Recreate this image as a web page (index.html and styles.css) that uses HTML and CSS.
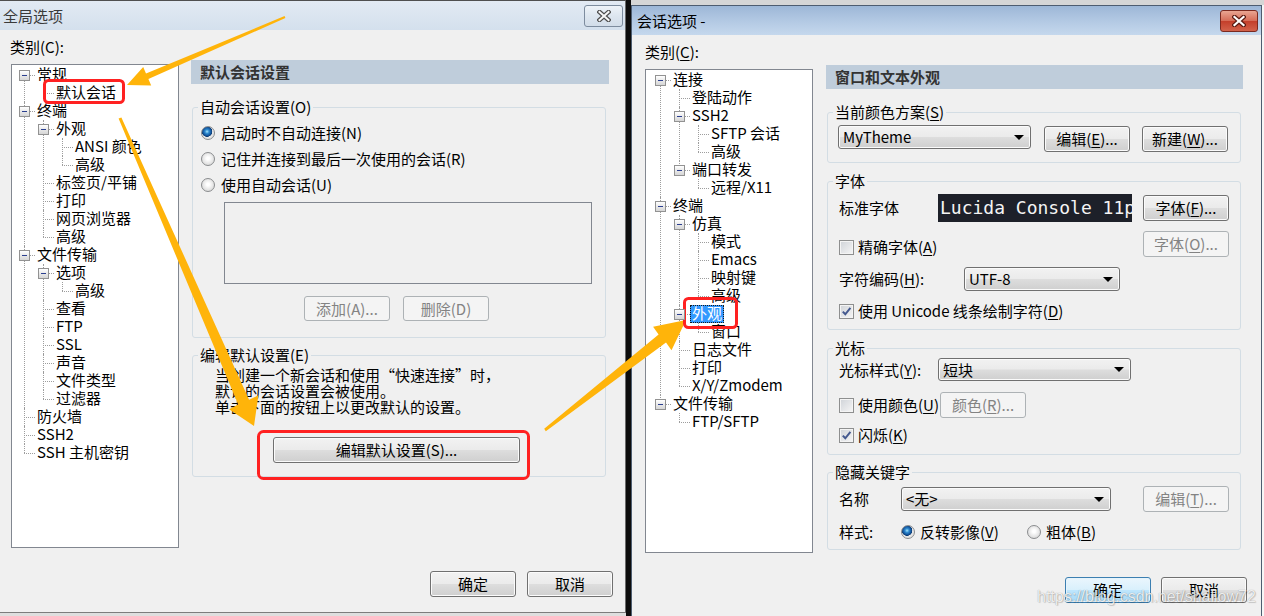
FILE: index.html
```html
<!DOCTYPE html>
<html lang="zh-CN">
<head>
    <meta charset="UTF-8">
    <title>全局选项 / 会话选项</title>
    <link rel="stylesheet" href="styles.css">
</head>
<body>
<div class="screen">
    <div class="col-left">
        <section class="dialog global">
            <header class="titlebar">
                <span class="title">全局选项</span>
                <button class="close">
                    <svg width="14" height="12" viewBox="0 0 14 12"><path d="M2.5 2 L11.5 10 M11.5 2 L2.5 10" stroke="#4d4d4d" stroke-width="4.4" stroke-linecap="square"/><path d="M2.5 2 L11.5 10 M11.5 2 L2.5 10" stroke="#f6f6f6" stroke-width="2" stroke-linecap="square"/></svg>
                </button>
            </header>
            <div class="dlg-body">
                <div class="cat">
                    <div class="cat-label">类别(C):</div>
                    <div class="tree tree-g">
                        <ul>
                            <li><i class="exp"></i><span class="lbl">常规</span>
                                <ul><li><span class="lbl">默认会话</span></li></ul>
                            </li>
                            <li><i class="exp"></i><span class="lbl">终端</span>
                                <ul>
                                    <li><i class="exp"></i><span class="lbl">外观</span>
                                        <ul>
                                            <li><span class="lbl">ANSI 颜色</span></li>
                                            <li><span class="lbl">高级</span></li>
                                        </ul>
                                    </li>
                                    <li><span class="lbl">标签页/平铺</span></li>
                                    <li><span class="lbl">打印</span></li>
                                    <li><span class="lbl">网页浏览器</span></li>
                                    <li><span class="lbl">高级</span></li>
                                </ul>
                            </li>
                            <li><i class="exp"></i><span class="lbl">文件传输</span>
                                <ul>
                                    <li><i class="exp"></i><span class="lbl">选项</span>
                                        <ul><li><span class="lbl">高级</span></li></ul>
                                    </li>
                                    <li><span class="lbl">查看</span></li>
                                    <li><span class="lbl">FTP</span></li>
                                    <li><span class="lbl">SSL</span></li>
                                    <li><span class="lbl">声音</span></li>
                                    <li><span class="lbl">文件类型</span></li>
                                    <li><span class="lbl">过滤器</span></li>
                                </ul>
                            </li>
                            <li><span class="lbl">防火墙</span></li>
                            <li><span class="lbl">SSH2</span></li>
                            <li><span class="lbl">SSH 主机密钥</span></li>
                        </ul>
                    </div>
                </div>

                <div class="panel">
                    <div class="panel-head">默认会话设置</div>

                    <fieldset class="fs fs-auto">
                        <legend>自动会话设置(O)</legend>
                        <div class="fs-body">
                            <div class="radio-item"><span class="radio on"></span><span>启动时不自动连接(N)</span></div>
                            <div class="radio-item"><span class="radio"></span><span>记住并连接到最后一次使用的会话(R)</span></div>
                            <div class="radio-item"><span class="radio"></span><span>使用自动会话(U)</span></div>
                            <div class="listbox"></div>
                            <div class="btn-row">
                                <button class="btn dis h25">添加(A)...</button>
                                <button class="btn dis h25">删除(D)</button>
                            </div>
                        </div>
                    </fieldset>

                    <fieldset class="fs fs-edit">
                        <legend>编辑默认设置(E)</legend>
                        <div class="fs-body">
                            <p class="note">当创建一个新会话和使用“快速连接”时，<br>默认的会话设置会被使用。<br>单击下面的按钮上以更改默认的设置。</p>
                            <button class="btn btn-wide">编辑默认设置(S)...</button>
                        </div>
                    </fieldset>
                </div>
            </div>
            <footer class="dlg-foot">
                <button class="btn">确定</button>
                <button class="btn">取消</button>
            </footer>
        </section>
    </div>

    <div class="col-right">
        <div class="backdrop"></div>
        <section class="dialog session">
            <header class="titlebar">
                <span class="title">会话选项 -</span>
                <button class="close red">
                    <svg width="14" height="12" viewBox="0 0 14 12"><path d="M2.5 2 L11.5 10 M11.5 2 L2.5 10" stroke="#5a1a12" stroke-width="4.6" stroke-linecap="square"/><path d="M2.5 2 L11.5 10 M11.5 2 L2.5 10" stroke="#ffffff" stroke-width="2.2" stroke-linecap="square"/></svg>
                </button>
            </header>
            <div class="dlg-body">
                <div class="cat">
                    <div class="cat-label">类别(<u>C</u>):</div>
                    <div class="tree tree-s">
                        <ul>
                            <li><i class="exp"></i><span class="lbl">连接</span>
                                <ul>
                                    <li><span class="lbl">登陆动作</span></li>
                                    <li><i class="exp"></i><span class="lbl">SSH2</span>
                                        <ul>
                                            <li><span class="lbl">SFTP 会话</span></li>
                                            <li><span class="lbl">高级</span></li>
                                        </ul>
                                    </li>
                                    <li><i class="exp"></i><span class="lbl">端口转发</span>
                                        <ul><li><span class="lbl">远程/X11</span></li></ul>
                                    </li>
                                </ul>
                            </li>
                            <li><i class="exp"></i><span class="lbl">终端</span>
                                <ul>
                                    <li><i class="exp"></i><span class="lbl">仿真</span>
                                        <ul>
                                            <li><span class="lbl">模式</span></li>
                                            <li><span class="lbl">Emacs</span></li>
                                            <li><span class="lbl">映射键</span></li>
                                            <li><span class="lbl">高级</span></li>
                                        </ul>
                                    </li>
                                    <li><i class="exp"></i><span class="lbl sel">外观</span>
                                        <ul><li><span class="lbl">窗口</span></li></ul>
                                    </li>
                                    <li><span class="lbl">日志文件</span></li>
                                    <li><span class="lbl">打印</span></li>
                                    <li><span class="lbl">X/Y/Zmodem</span></li>
                                </ul>
                            </li>
                            <li><i class="exp"></i><span class="lbl">文件传输</span>
                                <ul><li><span class="lbl">FTP/SFTP</span></li></ul>
                            </li>
                        </ul>
                    </div>
                </div>

                <div class="panel">
                    <div class="panel-head">窗口和文本外观</div>

                    <fieldset class="fs fs-scheme">
                        <legend>当前颜色方案(<u>S</u>)</legend>
                        <div class="fs-body">
                            <div class="row">
                                <div class="combo w193 scheme-combo"><span>MyTheme</span><span class="caret"></span></div>
                                <button class="btn gap13">编辑(<u>E</u>)...</button>
                                <button class="btn gap12">新建(<u>W</u>)...</button>
                            </div>
                        </div>
                    </fieldset>

                    <fieldset class="fs fs-font">
                        <legend>字体</legend>
                        <div class="fs-body">
                            <div class="row">
                                <span class="label w99">标准字体</span>
                                <div class="font-preview">Lucida Console 11pt</div>
                                <button class="btn push">字体(<u>F</u>)...</button>
                            </div>
                            <div class="row row-top mt9">
                                <div class="chk low"><span class="box"></span><span>精确字体(<u>A</u>)</span></div>
                                <button class="btn dis push">字体(<u>O</u>)...</button>
                            </div>
                            <div class="row mt10">
                                <span class="label w125">字符编码(<u>H</u>):</span>
                                <div class="combo w156"><span>UTF-8</span><span class="caret"></span></div>
                            </div>
                            <div class="row mt11">
                                <div class="chk"><span class="box"><svg width="11" height="11" viewBox="0 0 11 11"><path d="M1.8 5.6 L4.3 8.3 L9.4 1.8" fill="none" stroke="#44598f" stroke-width="2"/></svg></span><span>使用 Unicode 线条绘制字符(<u>D</u>)</span></div>
                            </div>
                        </div>
                    </fieldset>

                    <fieldset class="fs fs-cursor">
                        <legend>光标</legend>
                        <div class="fs-body">
                            <div class="row">
                                <span class="label w99">光标样式(<u>Y</u>):</span>
                                <div class="combo w193 h23"><span>短块</span><span class="caret"></span></div>
                            </div>
                            <div class="row mt11">
                                <div class="chk w101"><span class="box"></span><span>使用颜色(<u>U</u>)</span></div>
                                <button class="btn dis">颜色(<u>R</u>)...</button>
                            </div>
                            <div class="row mt8">
                                <div class="chk"><span class="box"><svg width="11" height="11" viewBox="0 0 11 11"><path d="M1.8 5.6 L4.3 8.3 L9.4 1.8" fill="none" stroke="#44598f" stroke-width="2"/></svg></span><span>闪烁(<u>K</u>)</span></div>
                            </div>
                        </div>
                    </fieldset>

                    <fieldset class="fs fs-hide">
                        <legend>隐藏关键字</legend>
                        <div class="fs-body">
                            <div class="row">
                                <span class="label w62">名称</span>
                                <div class="combo w210 h24"><span>&lt;无&gt;</span><span class="caret"></span></div>
                                <button class="btn dis push">编辑(<u>T</u>)...</button>
                            </div>
                            <div class="row mt11">
                                <span class="label w62">样式:</span>
                                <div class="radio-item tight w126"><span class="radio on"></span><span>反转影像(<u>V</u>)</span></div>
                                <div class="radio-item tight"><span class="radio"></span><span>粗体(<u>B</u>)</span></div>
                            </div>
                        </div>
                    </fieldset>
                </div>
            </div>
            <footer class="dlg-foot">
                <button class="btn def">确定</button>
                <button class="btn">取消</button>
            </footer>
        </section>
    </div>

    <svg class="annot" width="1264" height="616" viewBox="0 0 1264 616">
        <g fill="#ffb40a">
            <polygon points="285.4,17.9 148.4,79.1 151.2,85.5 127,85 143.2,67.1 146.0,73.5 284.6,16.1"/>
            <polygon points="121.4,117.4 249.1,399.8 258.4,395.2 254,426 229.1,409.2 238.2,404.6 118.6,118.6"/>
            <polygon points="545.8,431.2 666.0,342.6 671.5,350.3 686,320 653.1,326.7 658.6,334.5 544.2,428.8"/>
        </g>
        <g fill="none" stroke="#ff2121" stroke-width="3">
            <rect x="44.5" y="80.5" width="79" height="22" rx="4"/>
            <rect x="258.5" y="431.5" width="270" height="47" rx="5"/>
            <rect x="684.5" y="298.5" width="52" height="29" rx="4"/>
        </g>
    </svg>
    <div class="watermark">https://blog.csdn.net/shallow72</div>
</div>
</body>
</html>
```

FILE: styles.css
```css
* {
    box-sizing: border-box;
}

body {
    margin: 0;
    font: 15px/18px "Noto Sans CJK SC", "Liberation Sans", sans-serif;
    color: #000;
    background: #0d0d0d;
}

u {
    text-decoration: underline;
    text-underline-offset: 2px;
}

.screen {
    position: relative;
    width: 1264px;
    height: 616px;
    overflow: hidden;
    display: flex;
    gap: 5px;
    background: #0d0d0d;
}

.col-left {
    width: 626px;
    background: #dedede;
}

.col-right {
    width: 633px;
    display: flex;
    flex-direction: column;
    background: #f6f6f6;
}

.backdrop {
    height: 5px;
    flex: none;
    background: #d6d6d6;
}

/* dialog frame */
.dialog {
    display: flex;
    flex-direction: column;
    background: #f0f0f0;
}

.global {
    height: 613px;
    border-top: 1px solid #4f4f4f;
    border-right: 1px solid #6c6c6c;
    border-bottom: 1px solid #7c7c7c;
}

.session {
    width: 631px;
    height: 640px;
    flex: none;
    border: 1px solid #4e5d70;
}

.titlebar {
    height: 29px;
    flex: none;
    display: flex;
    align-items: center;
    justify-content: space-between;
    padding: 0 2px 0 3px;
    background: linear-gradient(#e2eaf3, #d4e0ed);
    color: #3a3a3a;
}

.session .titlebar {
    padding: 0 3px 0 5px;
    background: linear-gradient(#9db7d7, #b4cae4 55%, #c5d8ed);
    color: #000;
}

.close {
    width: 39px;
    height: 22px;
    padding: 0;
    display: flex;
    align-items: center;
    justify-content: center;
    border: 1px solid #7d8c9e;
    border-radius: 3px;
    background: linear-gradient(#eef3f8, #dde6ef 50%, #d2dde9);
}

.close.red {
    width: 38px;
    border-color: #7a2a20;
    background: linear-gradient(#e9a592, #d66d58 48%, #c43f2b 52%, #d2624b);
}

.dlg-body {
    display: grid;
    grid-template-columns: 168px 418px;
    column-gap: 12px;
    padding-left: 11px;
}

.session .dlg-body {
    grid-template-columns: 168px 417px;
    column-gap: 13px;
    padding-left: 13px;
}

.cat-label {
    height: 18px;
    margin: 8px 0 8px -1px;
}

.session .cat-label {
    margin-left: 0;
}

.dlg-foot {
    display: flex;
    justify-content: flex-end;
    gap: 11px;
    margin-top: 23px;
    padding-right: 12px;
}

.session .dlg-foot {
    gap: 10px;
    margin-top: 24px;
    padding-right: 14px;
}

/* tree view */
.tree {
    height: 484px;
    border: 1px solid #828790;
    background: #fff;
    overflow: hidden;
}

.tree-g {
    padding: 1px 0 0 7px;
}

.tree-s {
    padding: 1px 0 0 9px;
}

.tree ul {
    list-style: none;
    margin: 0;
    padding: 0;
}

.tree li ul {
    margin-left: 3px;
}

.tree li {
    position: relative;
    padding-left: 16px;
    line-height: 18px;
}

.tree li::before {
    content: "";
    position: absolute;
    left: 5px;
    top: 9px;
    width: 11px;
    border-top: 1px dotted #9d9d9d;
}

.tree li::after {
    content: "";
    position: absolute;
    left: 5px;
    top: 0;
    bottom: 0;
    border-left: 1px dotted #9d9d9d;
}

.tree li:last-child::after {
    bottom: auto;
    height: 9px;
}

.tree > ul > li:first-child::after {
    top: 9px;
}

.exp {
    position: absolute;
    left: 0;
    top: 4px;
    width: 11px;
    height: 11px;
    border: 1px solid #929292;
    background: linear-gradient(#ffffff, #e9e9e9 50%, #d6d6d6);
    z-index: 1;
}

.exp::after {
    content: "";
    position: absolute;
    left: 2px;
    top: 4px;
    width: 5px;
    height: 1px;
    background: #2b3f8f;
}

.lbl {
    display: inline-block;
    vertical-align: top;
    height: 18px;
    padding: 0 2px;
    line-height: 16px;
    white-space: nowrap;
}

.lbl.sel {
    background: #3399ff;
    color: #fff;
    outline: 1px dotted #1a1a1a;
    outline-offset: -1px;
}

/* right side panel */
.panel-head {
    height: 24px;
    margin-top: 30px;
    padding-left: 9px;
    line-height: 24px;
    font-weight: bold;
    color: #333;
    background: #bfcddb;
}

.fs {
    width: 414px;
    min-width: 0;
    margin: 0 0 0 1px;
    padding: 0;
    border: 1px solid #d3dde4;
    border-radius: 3px;
}

.fs legend {
    margin-left: 5px;
    padding: 0 2px;
    line-height: 18px;
}

.fs-auto {
    margin-top: 14px;
}

.fs-auto .fs-body {
    padding: 8px 0 16px 8px;
}

.fs-edit {
    margin-top: 8px;
}

.fs-edit .fs-body {
    padding: 3px 0 13px 8px;
}

.fs-scheme {
    margin-top: 14px;
}

.fs-scheme .fs-body {
    padding: 4px 11px 10px 11px;
}

.fs-font {
    margin-top: 9px;
}

.fs-font .fs-body {
    padding: 4px 11px 9px 11px;
}

.fs-cursor {
    margin-top: 9px;
}

.fs-cursor .fs-body {
    padding: 1px 11px 10px 11px;
}

.fs-hide {
    margin-top: 8px;
}

.fs-hide .fs-body {
    padding: 5px 11px 8px 11px;
}

.row {
    display: flex;
    align-items: center;
}

.row-top {
    align-items: flex-start;
}

.chk.low {
    margin-top: 7px;
}

.mt8 { margin-top: 8px; }
.mt9 { margin-top: 9px; }
.mt10 { margin-top: 10px; }
.mt11 { margin-top: 11px; }
.mt12 { margin-top: 12px; }

.label {
    flex: none;
    white-space: nowrap;
}

.w62 { width: 62px; }
.w99 { width: 99px; }
.w101 { width: 101px; }
.w125 { width: 125px; }
.w126 { width: 126px; }

.push {
    margin-left: auto;
}

.gap13 {
    margin-left: 13px;
}

.gap12 {
    margin-left: 12px;
}

/* radios and checkboxes */
.radio-item {
    display: flex;
    align-items: center;
    gap: 6px;
    height: 18px;
    flex: none;
    white-space: nowrap;
}

.radio-item + .radio-item {
    margin-top: 8px;
}

.row .radio-item + .radio-item {
    margin-top: 0;
}

.radio-item.tight {
    gap: 5px;
}

.radio {
    flex: none;
    width: 14px;
    height: 14px;
    border: 1px solid #8a8c8e;
    border-radius: 50%;
    background: radial-gradient(circle at 50% 45%, #ffffff 15%, #e4e4e4 60%, #cdcdcd);
}

.radio.on {
    background: radial-gradient(circle at 42% 38%, #a6e4fb 0, #2f8bd0 2px, #13569e 4px, #0f3c72 5px, #e8e8e8 5.5px, #dcdcdc 100%);
}

.chk {
    display: flex;
    align-items: center;
    gap: 4px;
    height: 18px;
    flex: none;
    white-space: nowrap;
}

.box {
    flex: none;
    width: 15px;
    height: 15px;
    display: flex;
    align-items: center;
    justify-content: center;
    border: 1px solid #8e8f8f;
    background: linear-gradient(135deg, #cfd3d8, #f6f6f6);
    box-shadow: inset 0 0 0 1px #f4f4f4;
}

/* list box and buttons */
.listbox {
    width: 368px;
    height: 82px;
    margin: 8px 0 0 23px;
    border: 1px solid #828790;
    background: #f0f0f0;
}

.btn-row {
    display: flex;
    gap: 13px;
    margin: 12px 0 0 103px;
}

.note {
    margin: 0;
    padding-left: 14px;
    line-height: 16px;
}

.btn {
    flex: none;
    width: 86px;
    height: 26px;
    padding: 0;
    font: inherit;
    line-height: 18px;
    color: #000;
    border: 1px solid #707070;
    border-radius: 3px;
    background: linear-gradient(#f2f2f2, #ebebeb 48%, #dddddd 52%, #cfcfcf);
    box-shadow: inset 0 0 0 1px #fbfbfb;
}

.btn.h25 {
    height: 25px;
}

.btn.dis {
    color: #838383;
    border-color: #adb2b5;
    background: #f4f4f4;
    box-shadow: none;
}

.btn.def {
    border-color: #3c7fb1;
    background: linear-gradient(#eaf6fd, #d9f0fc 48%, #bee6fd 52%, #a7d9f5);
    box-shadow: inset 0 0 0 1px #e6f4fc;
}

.btn-wide {
    display: block;
    width: 247px;
    margin: 22px 0 0 72px;
}

.combo {
    flex: none;
    display: flex;
    align-items: center;
    height: 24px;
    padding-left: 4px;
    border: 1px solid #707070;
    border-radius: 3px;
    background: linear-gradient(#f2f2f2, #ebebeb 48%, #dddddd 52%, #cfcfcf);
    box-shadow: inset 0 0 0 1px #fbfbfb;
    white-space: nowrap;
}

.combo.h23 {
    height: 23px;
}

.w156 { width: 156px; }
.w193 { width: 193px; }
.w210 { width: 210px; }

.scheme-combo {
    margin-left: -1px;
    align-self: flex-start;
}

.fs-scheme .row {
    align-items: flex-start;
}

.fs-scheme .btn {
    margin-top: 1px;
}

.caret {
    margin-left: auto;
    margin-right: 6px;
    border-left: 5px solid transparent;
    border-right: 5px solid transparent;
    border-top: 5px solid #000;
}

.font-preview {
    flex: none;
    width: 194px;
    height: 28px;
    padding-left: 2px;
    overflow: hidden;
    white-space: nowrap;
    font: 18px/28px "DejaVu Sans Mono", monospace;
    color: #f4f4f4;
    background: #1d2029;
}

/* markup drawn over the screenshot */
.annot {
    position: absolute;
    left: 0;
    top: 0;
    pointer-events: none;
}

.watermark {
    position: absolute;
    left: 1037px;
    top: 588px;
    font: 16px/18px "Liberation Sans", sans-serif;
    color: rgba(255, 255, 255, 0.85);
    text-shadow: 0 0 1px rgba(0, 0, 0, 0.4), 1px 1px 1px rgba(0, 0, 0, 0.15);
    pointer-events: none;
}
```
